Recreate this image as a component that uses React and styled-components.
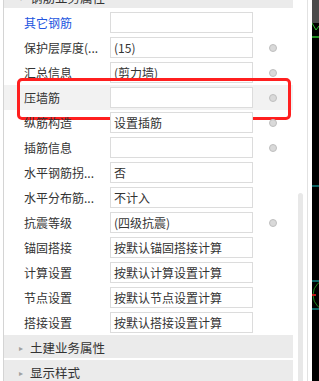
import React from "react";
import styled, { createGlobalStyle } from "styled-components";

const rows = [
  { label: "其它钢筋", value: "", link: true },
  { label: "保护层厚度(...", value: "(15)", dot: true },
  { label: "汇总信息", value: "(剪力墙)", dot: true },
  { label: "压墙筋", value: "", dot: true, active: true },
  { label: "纵筋构造", value: "设置插筋", dot: true },
  { label: "插筋信息", value: "", dot: true },
  { label: "水平钢筋拐...", value: "否" },
  { label: "水平分布筋...", value: "不计入" },
  { label: "抗震等级", value: "(四级抗震)", dot: true },
  { label: "锚固搭接", value: "按默认锚固搭接计算" },
  { label: "计算设置", value: "按默认计算设置计算" },
  { label: "节点设置", value: "按默认节点设置计算" },
  { label: "搭接设置", value: "按默认搭接设置计算" },
];

const App = () => {
  return (
    <>
      <GlobalStyle />
      <Page>
        <Panel>
          <Inner>
            <List>
              <GroupHeader>
                <Arrow>▾</Arrow>
                钢筋业务属性
              </GroupHeader>
              {rows.map((r) => (
                <Row key={r.label} active={r.active}>
                  <Label link={r.link}>{r.label}</Label>
                  <Field>{r.value}</Field>
                  <DotCell>{r.dot && <Dot />}</DotCell>
                  {r.active && <Highlight />}
                </Row>
              ))}
              <GroupHeader>
                <Arrow>▸</Arrow>
                土建业务属性
              </GroupHeader>
              <GroupHeader>
                <Arrow>▸</Arrow>
                显示样式
              </GroupHeader>
            </List>
            <ScrollTrack>
              <Thumb />
            </ScrollTrack>
          </Inner>
        </Panel>
        <Canvas>
          <svg width="7" height="381" viewBox="0 0 7 381">
            <rect x="0" y="0" width="7" height="381" fill="#000" />
            <rect x="0" y="0" width="7" height="23" fill="#4b4b4b" />
            <polyline points="0,23 4,30 7,26" fill="none" stroke="#2fbf2f" strokeWidth="1" />
            <line x1="0" y1="37" x2="7" y2="37" stroke="#2fbf2f" strokeWidth="1.5" />
            <line x1="0" y1="186" x2="7" y2="186" stroke="#19c6c6" strokeWidth="1" />
            <line x1="0" y1="281" x2="7" y2="281" stroke="#19c6c6" strokeWidth="1" />
            <circle cx="17" cy="295" r="16" fill="none" stroke="#1f8a1f" strokeWidth="1" />
            <line x1="0" y1="295" x2="4" y2="295" stroke="#c01818" strokeWidth="2" />
            <line x1="0" y1="309" x2="7" y2="309" stroke="#19c6c6" strokeWidth="1" />
          </svg>
        </Canvas>
      </Page>
    </>
  );
};

export default App;

const GlobalStyle = createGlobalStyle`
  body {
    margin: 0;
    background: #fff;
    font-family: "Noto Sans CJK SC", "Noto Sans", sans-serif;
  }
`;

const Page = styled.div`
  display: flex;
  width: 319px;
  height: 381px;
  overflow: hidden;
`;

const Panel = styled.div`
  width: 312px;
  padding-left: 3px;
  box-sizing: border-box;
  display: flex;
  background: #fff;
`;

const Inner = styled.div`
  flex: 1;
  display: flex;
  border-left: 1px solid #d4d4d4;
`;

const List = styled.div`
  width: 289px;
  margin-top: -15px;
`;

const GroupHeader = styled.div`
  height: 23px;
  margin-bottom: 2px;
  background: #ebebeb;
  display: flex;
  align-items: center;
  padding-top: 2px;
  box-sizing: border-box;
  font-size: 12.5px;
  color: #333;
`;

const Arrow = styled.span`
  width: 9px;
  margin-left: 15px;
  margin-right: 2px;
  font-size: 8px;
  color: #a0a0a0;
`;

const Row = styled.div`
  position: relative;
  height: 25px;
  display: flex;
  align-items: center;
  background: ${({ active }) => (active ? "#f2f2f2" : "transparent")};
`;

const Label = styled.div`
  width: 106px;
  flex-shrink: 0;
  padding-left: 20px;
  box-sizing: border-box;
  font-size: 12px;
  color: ${({ link }) => (link ? "#2255e0" : "#333")};
  white-space: nowrap;
  overflow: hidden;
`;

const Field = styled.div`
  width: 143px;
  height: 21px;
  flex-shrink: 0;
  box-sizing: border-box;
  border: 1px solid #dcdcdc;
  background: #fff;
  padding-left: 3px;
  font-size: 12px;
  line-height: 19px;
  color: #333;
  white-space: nowrap;
  overflow: hidden;
`;

const DotCell = styled.div`
  width: 40px;
  display: flex;
  justify-content: center;
`;

const Dot = styled.span`
  width: 8px;
  height: 8px;
  border-radius: 50%;
  box-sizing: border-box;
  background: #d9d9d9;
  border: 1px solid #bfbfbf;
`;

const Highlight = styled.div`
  position: absolute;
  left: 13px;
  top: -7px;
  width: 274px;
  height: 42px;
  box-sizing: border-box;
  border: 3px solid #ff1f1f;
  border-radius: 5px;
  pointer-events: none;
`;

const ScrollTrack = styled.div`
  width: 14px;
  border-right: 1px solid #e2e2e2;
  margin-right: 4px;
`;

const Thumb = styled.div`
  margin-top: 193px;
  margin-left: 5px;
  width: 5px;
  height: 200px;
  border-radius: 3px;
  background: #e8e8e8;
`;

const Canvas = styled.div`
  width: 7px;
  height: 381px;
  background: #000;
`;
